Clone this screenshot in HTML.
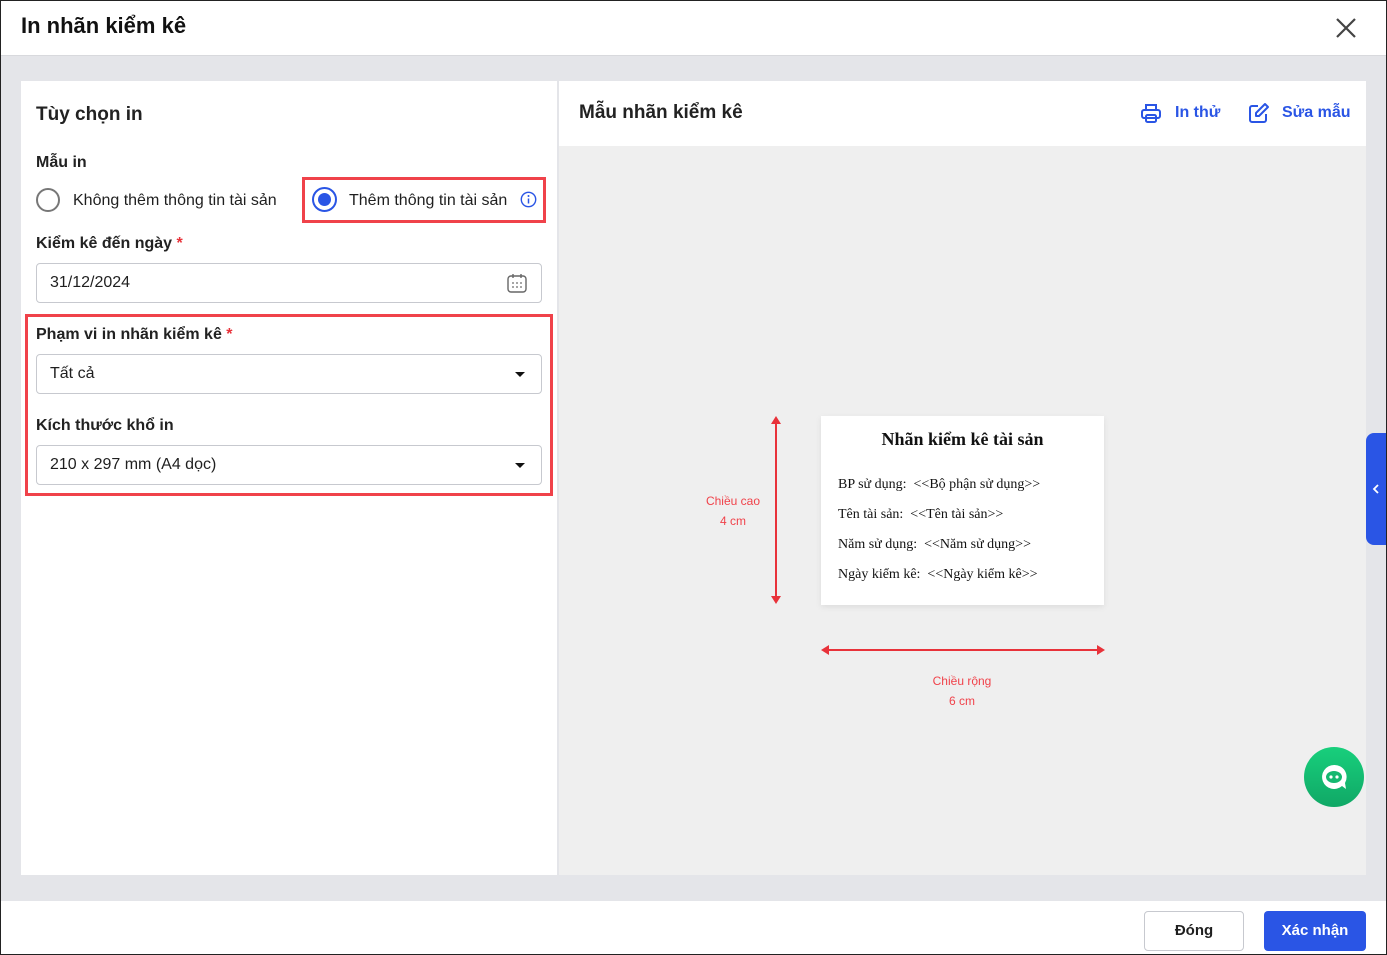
<!DOCTYPE html>
<html><head><meta charset="utf-8"><style>
*{box-sizing:border-box;margin:0;padding:0}
body{width:1387px;height:955px;overflow:hidden;font-family:"Liberation Sans",Roboto,sans-serif;color:#1f1f1f;background:#fff;position:relative}
.abs{position:absolute}
.hdr{left:0;top:0;width:1387px;height:56px;background:#fff;border-bottom:1px solid #d8d9dd}
.bg{left:0;top:56px;width:1387px;height:845px;background:#e4e5e9}
.lp{left:21px;top:81px;width:536px;height:794px;background:#fff}
.rp{left:559px;top:81px;width:807px;height:794px;background:#efefef}
.rh{left:559px;top:81px;width:807px;height:65px;background:#fff}
.lbl{font-size:16px;font-weight:bold;color:#222}
.inp{border:1px solid #c7c9cf;border-radius:4px;height:40px;background:#fff;font-size:16px;padding-left:13px;line-height:38px}
.red{border:3px solid #f0424a}
.caret{position:absolute;right:16px;top:17px;width:0;height:0;border-left:5px solid transparent;border-right:5px solid transparent;border-top:5px solid #111}
.serif{font-family:"Liberation Serif",serif;font-size:14px;color:#111}
.frame{left:0;top:0;width:1387px;height:955px;border:1px solid #222;pointer-events:none}
</style></head><body>
<div class="abs hdr"></div>
<div class="abs" style="left:21px;top:13px;font-size:22px;font-weight:bold;color:#111">In nhãn kiểm kê</div>
<svg class="abs" style="left:1335px;top:17px" width="22" height="22" viewBox="0 0 22 22"><path d="M2 2L20 20M20 2L2 20" stroke="#444" stroke-width="2.2"/></svg>
<div class="abs bg"></div>
<div class="abs lp"></div>
<div class="abs rp"></div>
<div class="abs rh"></div>

<div class="abs" style="left:36px;top:104px;font-size:19px;font-weight:bold;color:#222">Tùy chọn in</div>
<div class="abs lbl" style="left:36px;top:154px">Mẫu in</div>
<div class="abs" style="left:36px;top:188px;width:24px;height:24px;border:2px solid #777;border-radius:50%"></div>
<div class="abs" style="left:73px;top:192px;font-size:16px">Không thêm thông tin tài sản</div>
<div class="abs red" style="left:302px;top:177px;width:244px;height:46px"></div>
<div class="abs" style="left:312px;top:187px;width:25px;height:25px;border:2px solid #2a55e5;border-radius:50%"></div>
<div class="abs" style="left:318px;top:193px;width:13px;height:13px;background:#2a55e5;border-radius:50%"></div>
<div class="abs" style="left:349px;top:192px;font-size:16px">Thêm thông tin tài sản</div>
<svg class="abs" style="left:520px;top:191px" width="17" height="17" viewBox="0 0 17 17"><circle cx="8.5" cy="8.5" r="7.2" fill="none" stroke="#2a55e5" stroke-width="1.4"/><path d="M8.5 7.5v5" stroke="#2a55e5" stroke-width="1.5"/><circle cx="8.5" cy="5" r="1" fill="#2a55e5"/></svg>
<div class="abs lbl" style="left:36px;top:235px">Kiểm kê đến ngày <span style="color:#e8323a">*</span></div>
<div class="abs inp" style="left:36px;top:263px;width:506px">31/12/2024</div>
<svg class="abs" style="left:506px;top:272px" width="22" height="22" viewBox="0 0 22 22"><rect x="2" y="4" width="18" height="16" rx="3" fill="none" stroke="#666" stroke-width="1.4"/><path d="M7 2v4M15 2v4" stroke="#666" stroke-width="1.4"/><g fill="#666"><circle cx="7" cy="11" r=".9"/><circle cx="11" cy="11" r=".9"/><circle cx="15" cy="11" r=".9"/><circle cx="7" cy="15" r=".9"/><circle cx="11" cy="15" r=".9"/><circle cx="15" cy="15" r=".9"/></g></svg>
<div class="abs red" style="left:25px;top:314px;width:528px;height:182px"></div>
<div class="abs lbl" style="left:36px;top:326px">Phạm vi in nhãn kiểm kê <span style="color:#e8323a">*</span></div>
<div class="abs inp" style="left:36px;top:354px;width:506px">Tất cả<div class="caret"></div></div>
<div class="abs lbl" style="left:36px;top:417px">Kích thước khổ in</div>
<div class="abs inp" style="left:36px;top:445px;width:506px">210 x 297 mm (A4 dọc)<div class="caret"></div></div>

<div class="abs" style="left:579px;top:102px;font-size:19px;font-weight:bold;color:#222">Mẫu nhãn kiểm kê</div>
<svg class="abs" style="left:1140px;top:102px" width="22" height="22" viewBox="0 0 22 22" fill="none" stroke="#2a55e5" stroke-width="2"><path d="M6 8V3h10v5"/><rect x="2" y="8" width="18" height="8" rx="2"/><rect x="6" y="13" width="10" height="7" rx="1.5"/></svg>
<div class="abs" style="left:1175px;top:104px;font-size:16px;color:#2a55e5;font-weight:bold">In thử</div>
<svg class="abs" style="left:1248px;top:102px" width="22" height="22" viewBox="0 0 22 22" fill="none" stroke="#2a55e5" stroke-width="2" stroke-linejoin="round"><path d="M10 4H4a2 2 0 0 0-2 2v12a2 2 0 0 0 2 2h12a2 2 0 0 0 2-2v-6"/><path d="M17 2l3 3-9 9H8v-3z"/></svg>
<div class="abs" style="left:1282px;top:104px;font-size:16px;color:#2a55e5;font-weight:bold">Sửa mẫu</div>

<div class="abs" style="left:821px;top:416px;width:283px;height:189px;background:#fff;box-shadow:0 2px 6px rgba(0,0,0,.08)"></div>
<div class="abs serif" style="left:821px;top:429px;width:283px;text-align:center;font-size:18px;font-weight:bold">Nhãn kiểm kê tài sản</div>
<div class="abs serif" style="left:838px;top:477px">BP sử dụng:&nbsp; &lt;&lt;Bộ phận sử dụng&gt;&gt;</div>
<div class="abs serif" style="left:838px;top:507px">Tên tài sản:&nbsp; &lt;&lt;Tên tài sản&gt;&gt;</div>
<div class="abs serif" style="left:838px;top:537px">Năm sử dụng:&nbsp; &lt;&lt;Năm sử dụng&gt;&gt;</div>
<div class="abs serif" style="left:838px;top:567px">Ngày kiểm kê:&nbsp; &lt;&lt;Ngày kiểm kê&gt;&gt;</div>
<svg class="abs" style="left:768px;top:414px" width="16" height="192" viewBox="0 0 16 192"><path d="M8 8V184" stroke="#e8323a" stroke-width="2"/><path d="M3 10L8 2L13 10Z M3 182L8 190L13 182Z" fill="#e8323a"/></svg>
<svg class="abs" style="left:819px;top:642px" width="288" height="16" viewBox="0 0 288 16"><path d="M8 8H280" stroke="#e8323a" stroke-width="2"/><path d="M10 3L2 8L10 13Z M278 3L286 8L278 13Z" fill="#e8323a"/></svg>
<div class="abs" style="left:700px;top:491px;width:66px;text-align:center;font-size:12px;color:#f0424a;line-height:20px">Chiều cao<br>4 cm</div>
<div class="abs" style="left:922px;top:671px;width:80px;text-align:center;font-size:12px;color:#f0424a;line-height:20px">Chiều rộng<br>6 cm</div>

<div class="abs" style="left:1366px;top:433px;width:21px;height:112px;background:#2a55e5;border-radius:8px 0 0 8px"></div>
<svg class="abs" style="left:1371px;top:483px" width="10" height="12" viewBox="0 0 10 12"><path d="M7 2L3 6L7 10" stroke="#fff" stroke-width="1.8" fill="none"/></svg>
<div class="abs" style="left:1304px;top:747px;width:60px;height:60px;border-radius:50%;background:linear-gradient(#18cf7c,#10a866)"></div>
<svg class="abs" style="left:1316px;top:759px" width="36" height="36" viewBox="0 0 36 36"><path d="M18 6a12 12 0 1 0 8 21l4 3-1-6a12 12 0 0 0-11-18z" fill="#fff"/><ellipse cx="18" cy="18" rx="8" ry="6" fill="#14b870"/><circle cx="15" cy="18" r="1.6" fill="#fff"/><circle cx="21" cy="18" r="1.6" fill="#fff"/></svg>

<div class="abs" style="left:1144px;top:911px;width:100px;height:40px;border:1px solid #c7c9cf;border-radius:4px;text-align:center;line-height:38px;font-size:15px;font-weight:bold">Đóng</div>
<div class="abs" style="left:1264px;top:911px;width:102px;height:40px;background:#2a55e5;border-radius:4px;text-align:center;line-height:40px;font-size:15px;font-weight:bold;color:#fff">Xác nhận</div>
<div class="abs frame"></div>
</body></html>
